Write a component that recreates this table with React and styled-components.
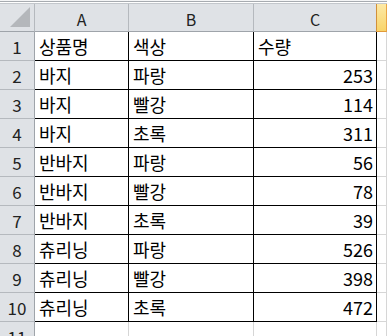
import React from "react";
import styled, { createGlobalStyle } from "styled-components";

const Global = createGlobalStyle`
  html, body { margin: 0; padding: 0; background: #ffffff; overflow: hidden; }
  body { font-family: "Noto Sans CJK KR", "Noto Sans", sans-serif; }
`;

const Sheet = styled.div`
  width: 387px;
  height: 336px;
  overflow: hidden;
  background: #ffffff;
`;

const TopStrip = styled.div`
  height: 4px;
  box-sizing: border-box;
  background: #eef0f2;
  border-top: 1px solid #f4f5f6;
  display: flex;
  flex-direction: column;
  & > span { display: block; height: 1px; }
`;

const Line = styled.span`
  background: ${(p) => p.$c};
`;

const Grid = styled.div`
  display: grid;
  grid-template-columns: 35px 94px 125px 123px 1fr;
  grid-template-rows: 28px repeat(11, 29px);
`;

const Corner = styled.div`
  background: #dfe2e6;
  border-right: 1px solid #b5b9be;
  border-bottom: 1px solid #9fa4aa;
  box-sizing: border-box;
  display: flex;
  align-items: flex-end;
  justify-content: flex-end;
  padding: 0 4px 4px 0;
`;

const ColHead = styled.div`
  box-sizing: border-box;
  background: ${(p) =>
    p.$active ? "linear-gradient(#fde9a6, #f8d46a)" : "#dfe2e6"};
  border-right: 1px solid ${(p) => (p.$active ? "#e9a545" : "#b5b9be")};
  border-left: ${(p) => (p.$active ? "1px solid #d1903a" : "none")};
  border-bottom: 1px solid ${(p) => (p.$active ? "#e29a3a" : "#9fa4aa")};
  margin-left: ${(p) => (p.$active ? "-1px" : "0")};
  display: flex;
  align-items: center;
  justify-content: center;
  font-family: "Noto Sans CJK KR", "Noto Sans", sans-serif;
  font-size: 16px;
  color: #222;
  padding-top: 2px;
`;

const RowHead = styled.div`
  box-sizing: border-box;
  background: #dfe2e6;
  border-right: 1px solid #9fa4aa;
  border-bottom: 1px solid #b5b9be;
  display: flex;
  align-items: center;
  justify-content: center;
  font-size: 17px;
  color: #222;
`;

const Cell = styled.div`
  box-sizing: border-box;
  border-right: 1px solid ${(p) => (p.$data ? "#000" : "#d6d6d6")};
  border-bottom: 1px solid ${(p) => (p.$data ? "#000" : "#d6d6d6")};
  display: flex;
  align-items: center;
  justify-content: ${(p) => (p.$num ? "flex-end" : "flex-start")};
  padding: 0 ${(p) => (p.$num ? "3px" : "0")} 0 ${(p) => (p.$num ? "0" : "4px")};
  font-family: "Noto Sans CJK KR", "Noto Sans", sans-serif;
  font-size: 18px;
  color: #000;
  white-space: nowrap;
  overflow: hidden;
`;

const rows = [
  ["상품명", "색상", "수량"],
  ["바지", "파랑", 253],
  ["바지", "빨강", 114],
  ["바지", "초록", 311],
  ["반바지", "파랑", 56],
  ["반바지", "빨강", 78],
  ["반바지", "초록", 39],
  ["츄리닝", "파랑", 526],
  ["츄리닝", "빨강", 398],
  ["츄리닝", "초록", 472],
];

export default function App() {
  return (
    <Sheet>
      <Global />
      <TopStrip>
        <Line $c="#a7abb0" />
        <Line $c="#ffffff" />
        <Line $c="#c3c7cc" />
      </TopStrip>
      <Grid>
        <Corner>
          <svg width="20" height="20" viewBox="0 0 20 20">
            <polygon points="20,0 20,20 0,20" fill="#b4b7bb" />
          </svg>
        </Corner>
        <ColHead>A</ColHead>
        <ColHead>B</ColHead>
        <ColHead>C</ColHead>
        <ColHead $active />
        {rows.map((r, i) => (
          <React.Fragment key={i}>
            <RowHead>{i + 1}</RowHead>
            {r.map((v, j) => (
              <Cell key={j} $data $num={typeof v === "number"}>
                {v}
              </Cell>
            ))}
            <Cell />
          </React.Fragment>
        ))}
        <RowHead>11</RowHead>
        <Cell />
        <Cell />
        <Cell />
        <Cell />
      </Grid>
    </Sheet>
  );
}
